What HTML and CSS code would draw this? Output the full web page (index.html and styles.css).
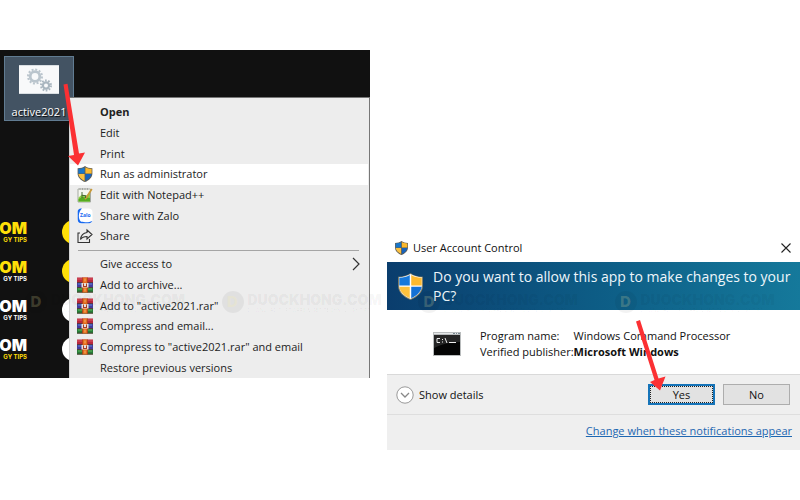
FILE: index.html
```html
<!DOCTYPE html>
<html lang="en">
<head>
<meta charset="utf-8">
<title>Run as administrator</title>
<link rel="stylesheet" href="styles.css">
</head>
<body>
<svg class="defs" aria-hidden="true">
  <symbol id="shield" viewBox="0 0 24 26">
    <path d="M12 0C9 2.500 5 3.500 0 3.500V12c0 6.500 5 11 12 14 7-3 12-7.500 12-14V3.500C19 3.500 15 2.500 12 0z" fill="#5f5e55"/>
    <path d="M11.300 1.900V12H1.200V4.600c4-.1 7.300-.9 10.100-2.700z" fill="#1976c9"/>
    <path d="M12.700 1.900V12h10.100V4.600c-4-.1-7.300-.9-10.100-2.700z" fill="#fbb92e"/>
    <path d="M1.200 13.200h10.100v11.100C5.700 21.700 1.800 18 1.200 13.200z" fill="#fbc040"/>
    <path d="M22.800 13.200H12.700v11.100c5.600-2.600 9.500-6.300 10.100-11.100z" fill="#1763bd"/>
  </symbol>
  <symbol id="shield-light" viewBox="0 0 24 26">
    <path d="M12 0C9 2.500 5 3.500 0 3.500V12c0 6.500 5 11 12 14 7-3 12-7.500 12-14V3.500C19 3.500 15 2.500 12 0z" fill="#85816a"/>
    <path d="M12 1C9 3 5 4 1 4.200V12c0 6 4.500 10 11 13 6.500-3 11-7 11-13V4.200C19 4 15 3 12 1z" fill="#fff"/>
    <path d="M11.300 1.900V12H1.200V4.600c4-.1 7.300-.9 10.100-2.700z" fill="#1679dc"/>
    <path d="M12.700 1.900V12h10.100V4.600c-4-.1-7.300-.9-10.100-2.700z" fill="#fdb92f"/>
    <path d="M1.200 13.200h10.100v11.100C5.700 21.700 1.800 18 1.200 13.200z" fill="#fdc13d"/>
    <path d="M22.800 13.200H12.700v11.100c5.600-2.600 9.500-6.300 10.100-11.100z" fill="#1471d6"/>
  </symbol>
  <symbol id="books" viewBox="0 0 16 15">
    <path fill="#b8283c" d="M0 0h16v5H0z"/><path fill="#dc5260" d="M0 1h16v1H0z"/>
    <path fill="#443c9c" d="M0 5h16v5H0z"/><path fill="#5a8bd8" d="M1 6h14v1H1z"/>
    <path fill="#287c38" d="M0 10h16v5H0z"/><path fill="#64b95c" d="M1 11h14v1H1z"/>
    <path fill="#4d2525" d="M0 4.500h16v.7H0zM0 9.500h16v.7H0zM0 14.300h16v.7H0z"/>
    <path fill="#e46c1c" d="M5.500 0h5v15h-5z"/><path fill="#a83b1d" d="M5 0h.7v15H5zM10.300 0h.7v15h-.7z"/>
    <path fill="#e8e1d9" d="M4.500 5.500h7v4.500h-7z"/><path fill="#a93b27" d="M6 6h1v2.500h2V6h1v3.500H6z"/>
    <path fill="#f5b36d" d="M7.500 1h1v3h-1zM7.500 11h1v3h-1z"/>
  </symbol>
</svg>

<main class="stage">
  <section class="desktop">
    <div class="shortcut">
      <svg class="shortcut-icon" viewBox="0 0 40 29" aria-hidden="true">
        <path fill="#f8f9fa" d="M0 0h40v29H0z"/><path fill="#d9dee2" d="M0 0h40v1H0zM0 28h40v1H0z"/>
        <g fill="none" stroke="#bac5cd">
          <circle cx="16" cy="11.500" r="7" stroke-width="2" stroke-dasharray="2 1.665"/>
          <circle cx="16" cy="11.500" r="4.800" stroke-width="2.800"/>
        </g>
        <g fill="none" stroke="#a9b6bf">
          <circle cx="27" cy="20.500" r="5" stroke-width="2" stroke-dasharray="1.700 1.440"/>
          <circle cx="27" cy="20.500" r="3.100" stroke-width="2.200"/>
        </g>
      </svg>
      <span class="shortcut-name">active2021</span>
    </div>
    <div class="brands">
      <div class="brand yellow"><div class="brand-text"><b>OM</b><small>GY TIPS</small></div><i class="disc"></i></div>
      <div class="brand yellow pale-tag"><div class="brand-text"><b>OM</b><small>GY TIPS</small></div><i class="disc"></i></div>
      <div class="brand"><div class="brand-text"><b>OM</b><small>GY TIPS</small></div><i class="disc"></i></div>
      <div class="brand gold-tag"><div class="brand-text"><b>OM</b><small>GY TIPS</small></div><i class="disc"></i></div>
    </div>
    <nav class="menu" aria-label="File actions">
      <button class="item default">Open</button>
      <button class="item">Edit</button>
      <button class="item">Print</button>
      <button class="item active"><svg class="icon" aria-hidden="true"><use href="#shield"/></svg>Run as administrator</button>
      <button class="item"><svg class="icon" viewBox="0 0 16 16" aria-hidden="true">
        <path fill="#f5f7ef" stroke="#a5aaa1" d="M1 2h12.500v13H1z"/><path d="M1.500 10.500l3.500-3 4 1 4-2v8H1.500z" fill="#8fd048"/><path d="M1.500 12l4-2 7.500 1v3.500H1.500z" fill="#55ab20"/>
        <path d="M3 1v2M5.500 1v2M8 1v2M10.500 1v2" stroke="#a6a6a6"/><path d="M14.800 2L9.500 10.500 8 12" fill="none" stroke="#c99a3a" stroke-width="1.800"/><path d="M5 5v6M5 8.500h3.500V11" fill="none" stroke="#4b6b38"/></svg>Edit with Notepad++</button>
      <button class="item"><svg class="icon" viewBox="0 0 16 16" aria-hidden="true">
        <rect x=".5" y=".5" width="15" height="15" rx="4" fill="#fff"/><path d="M5 .5C1 .5.700 2 .7 5v6c0 3 1 4.300 4 4.300h6c2.500 0 4-.5 4.600-2.300C10 15.500 6.500 13.500 4 13.700 1 11 1 4 5 .5z" fill="#1769ef"/><text x="3" y="9" class="zalo-word">Zalo</text></svg>Share with Zalo</button>
      <button class="item"><svg class="icon" viewBox="0 0 16 16" aria-hidden="true"><path d="M3 5H1v9.500h11.500V11M10 2l5 4.500-5 4.500V8.500C7 8.500 5 9.300 3.500 11.500 4 7 6 5 10 4.500z" fill="none" stroke="#333" stroke-width="1.100"/></svg>Share</button>
      <hr>
      <button class="item">Give access to<svg class="chevron" viewBox="0 0 8 14" aria-hidden="true"><path d="M1 1l6 6-6 6" fill="none" stroke="#333" stroke-width="1.200"/></svg></button>
      <button class="item"><svg class="icon" aria-hidden="true"><use href="#books"/></svg>Add to archive...</button>
      <button class="item"><svg class="icon" aria-hidden="true"><use href="#books"/></svg>Add to "active2021.rar"</button>
      <button class="item"><svg class="icon" aria-hidden="true"><use href="#books"/></svg>Compress and email...</button>
      <button class="item"><svg class="icon" aria-hidden="true"><use href="#books"/></svg>Compress to "active2021.rar" and email</button>
      <button class="item">Restore previous versions</button>
    </nav>
    <svg class="arrow arrow-run" viewBox="0 0 20 84" aria-hidden="true"><path d="M-1.500 1.500L2.500.8 14 70.500 20 69.500 13 82.500 3 73 9 72z" fill="#fb3033"/></svg>
  </section>

  <section class="dialog" role="dialog" aria-labelledby="question">
    <header class="titlebar"><svg class="title-shield" aria-hidden="true"><use href="#shield"/></svg><span>User Account Control</span>
      <button class="close" aria-label="Close"><svg viewBox="0 0 10 10" aria-hidden="true"><path d="M.5.5l9 9M9.500.5l-9 9" stroke="#222" stroke-width="1.100"/></svg></button></header>
    <div class="banner"><svg class="banner-shield" aria-hidden="true"><use href="#shield-light"/></svg><h1 id="question">Do you want to allow this app to make changes to your PC?</h1></div>
    <div class="program">
      <svg class="console" viewBox="0 0 28 24" aria-hidden="true"><path fill="#b9bcbd" d="M0 0h28v24H0z"/><path fill="#e5e8e9" d="M1 1h26v1H1z"/><path fill="#788790" d="M20 1h2v1h-2zM23 1h1v1h-1zM25 1h2v1h-2z"/><path fill="#050505" d="M1 3h26v20H1z"/><path d="M1 3h26v7Q12 10 1 16z" fill="#252525"/><path d="M7 6.500H4v4h3M9.500 7v1M9.500 9.500v1M12 6l2 5M16 10.500h7" stroke="#eee" fill="none"/></svg>
      <dl><dt>Program name:</dt><dd>Windows Command Processor</dd><dt>Verified publisher:</dt><dd class="publisher">Microsoft Windows</dd></dl>
    </div>
    <div class="actions">
      <button class="details"><svg viewBox="0 0 18 18" aria-hidden="true"><circle cx="9" cy="9" r="8.200" fill="#fff" stroke="#999"/><path d="M5 7l4 4 4-4" fill="none" stroke="#888" stroke-width="1.300"/></svg>Show details</button>
      <button class="choice yes">Yes</button><button class="choice">No</button>
      <svg class="arrow arrow-yes" viewBox="0 0 28 74" aria-hidden="true"><path d="M-1 3.500L3 2 21.500 60.500 28.500 58.500 23 72.500 13 64 17.500 62z" fill="#fb3033"/></svg>
    </div>
    <footer class="footer"><a href="#">Change when these notifications appear</a></footer>
  </section>

  <div class="watermarks">
    <div class="mark"><span class="mark-disc">D</span><div class="mark-text"><b>DUOCKHONG.COM</b><small>DOWNLOAD SOFTWARE &amp; GET TECHNOLOGY TIPS</small></div></div>
    <div class="mark"><span class="mark-disc">D</span><div class="mark-text"><b>DUOCKHONG.COM</b><small>DOWNLOAD SOFTWARE &amp; GET TECHNOLOGY TIPS</small></div></div>
    <div class="mark"><span class="mark-disc">D</span><div class="mark-text"><b>DUOCKHONG.COM</b><small>DOWNLOAD SOFTWARE &amp; GET TECHNOLOGY TIPS</small></div></div>
    <div class="mark"><span class="mark-disc">D</span><div class="mark-text"><b>DUOCKHONG.COM</b><small>DOWNLOAD SOFTWARE &amp; GET TECHNOLOGY TIPS</small></div></div>
  </div>
</main>
</body>
</html>
```
FILE: styles.css
```css
* { box-sizing: border-box; }
body { margin: 0; background: #fff; color: #222; font: 11px/16px "Open Sans", "Noto Sans", sans-serif; }
button { border: 0; padding: 0; background: none; color: inherit; font: inherit; text-align: left; }
svg { display: block; flex: none; }
.defs { position: absolute; width: 0; height: 0; }
.stage { position: relative; display: grid; grid-template-columns: 370fr 413fr; column-gap: 17px; align-items: start; padding-top: 50px; min-height: 100vh; overflow: hidden; }

.desktop { position: relative; display: grid; grid-template-columns: 69px 1fr; grid-template-rows: 47px 1fr; min-height: 328px; background: #111; }
.shortcut { grid-area: 1 / 1; z-index: 0; width: 70px; height: 65px; margin: 6px 0 0 4px; padding-top: 8px; display: flex; flex-direction: column; align-items: center; gap: 10px; background: #435363; border: 1px solid #617c92; color: #fff; }
.shortcut-icon { width: 40px; height: 29px; }
.shortcut-name { text-shadow: 1px 1px 1px #000; }
.brands { grid-area: 2 / 1; padding-top: 115px; overflow: hidden; display: flex; flex-direction: column; color: #fff; }
.brand { height: 39px; display: flex; flex: none; align-items: center; justify-content: space-between; }
.brand-text { width: 27px; display: flex; flex-direction: column; align-items: flex-end; font-family: Inter, sans-serif; }
.brand b { font-size: 16px; line-height: 16px; font-weight: 900; }
.brand small { font-size: 6px; line-height: 7px; font-weight: 700; white-space: nowrap; }
.disc { width: 24px; height: 24px; flex: none; margin-right: -17px; border-radius: 50%; background: currentColor; }
.yellow { color: #ffdf08; }
.pale-tag small { color: #fff; }
.gold-tag small { color: #ffdf08; }

.menu { grid-area: 2 / 2; z-index: 1; display: flex; flex-direction: column; padding: 4px 1px 0 0; background: #ededed; border: solid #777; border-width: 1px 1px 0 0; box-shadow: inset 1px 0 #d6d6d6; }
.item { flex: 1; display: flex; align-items: center; position: relative; margin-left: 1px; padding-left: 30px; min-height: 20px; white-space: nowrap; }
.item .icon { width: 16px; height: 16px; margin: 0 7px 0 -23px; }
.default { font-weight: 700; }
.active { background: #fff; }
.chevron { width: 8px; height: 14px; margin: 0 8px 0 auto; }
.zalo-word { font: 700 5px "Open Sans", sans-serif; fill: #1769ef; }
.menu hr { width: auto; height: 1px; margin: 3px 9px; border: 0; background: #a5a5a5; }
.arrow { position: absolute; overflow: visible; z-index: 2; pointer-events: none; }
.arrow-run { left: 65px; top: 33px; width: 20px; height: 84px; }

.dialog { margin-top: 183px; background: #fff; color: #111; }
.titlebar { display: flex; align-items: center; height: 29px; padding: 0 9px 0 8px; gap: 5px; }
.title-shield { width: 13px; height: 14px; }
.close { margin-left: auto; }
.close svg { width: 10px; height: 10px; }
.banner { display: flex; align-items: center; gap: 10px; min-height: 48px; padding: 0 4px 0 11px; background: linear-gradient(90deg, #0a3d6d, #0d5c85 50%, #15799b); color: #eef6fb; }
.banner-shield { width: 25px; height: 27px; }
.banner h1 { margin: 0; font-size: 14px; line-height: 19px; font-weight: 400; }
.program { display: flex; align-items: center; gap: 19px; min-height: 64px; padding: 4px 8px 0 46px; }
.console { width: 28px; height: 24px; }
.program dl { display: grid; grid-template-columns: minmax(92px, max-content) 1fr; margin: 0; white-space: nowrap; }
.program dd { margin: 0; }
.publisher { font-weight: 700; }
.actions { position: relative; display: flex; align-items: center; gap: 8px; min-height: 40px; padding: 0 10px 0 9px; border-top: 1px solid #d9d9d9; background: #efefef; }
.details { display: flex; align-items: center; gap: 5px; margin-right: auto; }
.details svg { width: 18px; height: 18px; }
.choice { width: 67px; height: 21px; text-align: center; background: #e2e2e2; border: 1px solid #adadad; }
.yes { border: 2px solid #1674b9; outline: 1px dotted #222; outline-offset: -3px; }
.arrow-yes { right: 135px; top: -57px; width: 28px; height: 74px; }
.footer { display: flex; align-items: center; justify-content: flex-end; min-height: 36px; padding: 0 8px 3px 0; border-top: 1px solid #dedede; background: #efefef; }
.footer a { color: #1e67b2; }

.watermarks { position: absolute; z-index: 1; left: 25px; right: -11px; top: 291px; display: grid; grid-template-columns: repeat(4, 1fr); pointer-events: none; color: rgb(0 0 0 / 5%); font-family: Inter, sans-serif; }
.mark { display: flex; align-items: center; gap: 4px; }
.mark-disc { width: 22px; height: 22px; border-radius: 50%; background: rgb(0 0 0 / 5%); color: rgb(255 240 160 / 20%); font-size: 15px; line-height: 22px; font-weight: 800; text-align: center; }
.mark-text { display: flex; flex-direction: column; white-space: nowrap; }
.mark b { font-size: 14px; line-height: 15px; font-weight: 900; }
.mark small { font-size: 5px; line-height: 6px; }
```
